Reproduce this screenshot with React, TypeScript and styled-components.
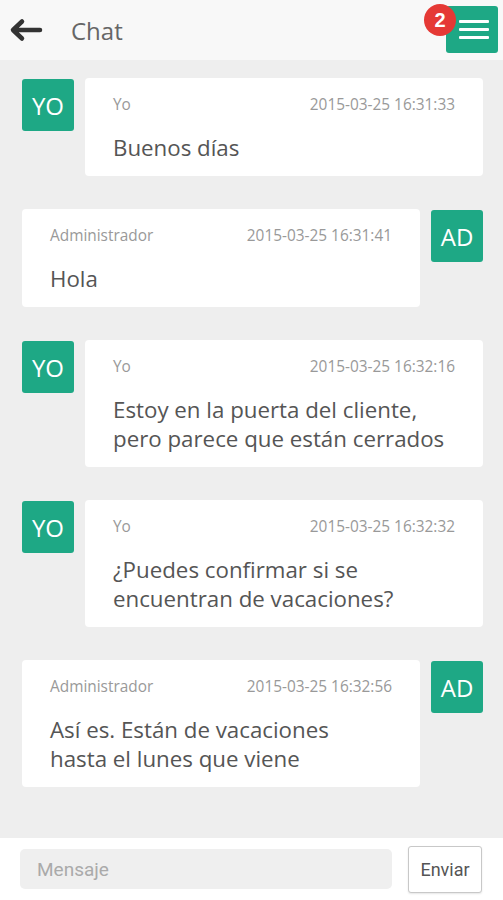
import React, { FC } from "react";
import styled, { createGlobalStyle } from "styled-components";

type Message = {
  mine: boolean;
  author: string;
  initials: string;
  time: string;
  lines: string[];
};

const messages: Message[] = [
  { mine: true, author: "Yo", initials: "YO", time: "2015-03-25 16:31:33", lines: ["Buenos días"] },
  { mine: false, author: "Administrador", initials: "AD", time: "2015-03-25 16:31:41", lines: ["Hola"] },
  {
    mine: true,
    author: "Yo",
    initials: "YO",
    time: "2015-03-25 16:32:16",
    lines: ["Estoy en la puerta del cliente,", "pero parece que están cerrados"],
  },
  {
    mine: true,
    author: "Yo",
    initials: "YO",
    time: "2015-03-25 16:32:32",
    lines: ["¿Puedes confirmar si se", "encuentran de vacaciones?"],
  },
  {
    mine: false,
    author: "Administrador",
    initials: "AD",
    time: "2015-03-25 16:32:56",
    lines: ["Así es. Están de vacaciones", "hasta el lunes que viene"],
  },
];

const App: FC = () => {
  return (
    <>
      <GlobalStyle />
      <Screen>
        <Header>
          <BackButton aria-label="Volver">
            <svg width="34" height="24" viewBox="0 0 34 24">
              <path
                d="M31 12H5M13 3.5L4 12l9 8.5"
                fill="none"
                stroke="#333"
                strokeWidth="4.5"
                strokeLinecap="round"
                strokeLinejoin="round"
              />
            </svg>
          </BackButton>
          <Title>Chat</Title>
          <MenuButton aria-label="Menú">
            <MenuLine />
            <MenuLine />
            <MenuLine />
            <Badge>2</Badge>
          </MenuButton>
        </Header>

        <Thread>
          {messages.map((m, i) => (
            <Row key={i} $mine={m.mine}>
              <Avatar>{m.initials}</Avatar>
              <Bubble>
                <Meta>
                  <span>{m.author}</span>
                  <span>{m.time}</span>
                </Meta>
                <Body>
                  {m.lines.map((l, j) => (
                    <div key={j}>{l}</div>
                  ))}
                </Body>
              </Bubble>
            </Row>
          ))}
        </Thread>

        <Footer>
          <Input placeholder="Mensaje" />
          <SendButton>Enviar</SendButton>
        </Footer>
      </Screen>
    </>
  );
};

export default App;

const GlobalStyle = createGlobalStyle`
  html, body {
    margin: 0;
    padding: 0;
    background: #eeeeee;
  }
  * {
    box-sizing: border-box;
  }
`;

const Screen = styled.div`
  width: 503px;
  height: 900px;
  display: flex;
  flex-direction: column;
  background: #eeeeee;
  font-family: "Open Sans", "Liberation Sans", sans-serif;
  overflow: hidden;
`;

const Header = styled.header`
  height: 60px;
  flex-shrink: 0;
  display: flex;
  align-items: center;
  padding: 0 5px 0 9px;
  background: #f8f8f8;
`;

const BackButton = styled.button`
  border: 0;
  background: none;
  padding: 0;
  width: 34px;
  height: 24px;
  display: flex;
  cursor: pointer;
`;

const Title = styled.h1`
  flex: 1;
  margin: 0 0 0 28px;
  font-size: 24px;
  font-weight: 400;
  color: #666;
`;

const MenuButton = styled.button`
  position: relative;
  width: 52px;
  height: 47px;
  margin-top: -1px;
  border: 0;
  border-radius: 3px;
  background: #1ea885;
  display: flex;
  flex-direction: column;
  align-items: center;
  justify-content: center;
  gap: 5px;
  padding: 0 0 0 4px;
`;

const MenuLine = styled.span`
  display: block;
  width: 30px;
  height: 3px;
  background: #fff;
  border-radius: 1px;
`;

const Badge = styled.span`
  position: absolute;
  left: -22px;
  top: -2px;
  width: 32px;
  height: 32px;
  border-radius: 50%;
  background: #e53935;
  color: #fff;
  font-size: 20px;
  font-weight: 700;
  line-height: 32px;
  text-align: center;
`;

const Thread = styled.main`
  flex: 1;
  display: flex;
  flex-direction: column;
  gap: 33px;
  padding: 18px 20px 0 22px;
`;

const Row = styled.div<{ $mine: boolean }>`
  display: flex;
  flex-direction: ${(p) => (p.$mine ? "row" : "row-reverse")};
  align-items: flex-start;
  gap: 11px;
`;

const Avatar = styled.div`
  width: 52px;
  height: 52px;
  flex-shrink: 0;
  margin-top: 1px;
  border-radius: 3px;
  background: #1ea885;
  color: #fff;
  font-size: 24px;
  display: flex;
  align-items: center;
  justify-content: center;
`;

const Bubble = styled.div`
  flex: 1;
  background: #fff;
  border-radius: 4px;
  padding: 15px 28px 14px;
`;

const Meta = styled.div`
  display: flex;
  justify-content: space-between;
  font-size: 15.4px;
  line-height: 24px;
  color: #999;
`;

const Body = styled.div`
  margin-top: 16px;
  font-size: 22.3px;
  line-height: 29px;
  color: #555;
`;

const Footer = styled.footer`
  height: 62px;
  flex-shrink: 0;
  display: flex;
  align-items: center;
  gap: 16px;
  padding: 0 21px 0 20px;
  background: #fff;
  font-family: Roboto, "Liberation Sans", sans-serif;
`;

const Input = styled.input`
  flex: 1;
  height: 40px;
  border: 0;
  border-radius: 5px;
  background: #efefef;
  padding: 0 17px;
  font-family: inherit;
  font-size: 19px;
  color: #555;
  outline: none;
  &::placeholder {
    color: #aaa;
  }
`;

const SendButton = styled.button`
  width: 74px;
  height: 47px;
  border: 1px solid #c8c8c8;
  border-radius: 3px;
  background: #fff;
  box-shadow: 0 1px 2px rgba(0, 0, 0, 0.1);
  font-family: inherit;
  font-size: 18px;
  color: #555;
  padding: 0;
`;
